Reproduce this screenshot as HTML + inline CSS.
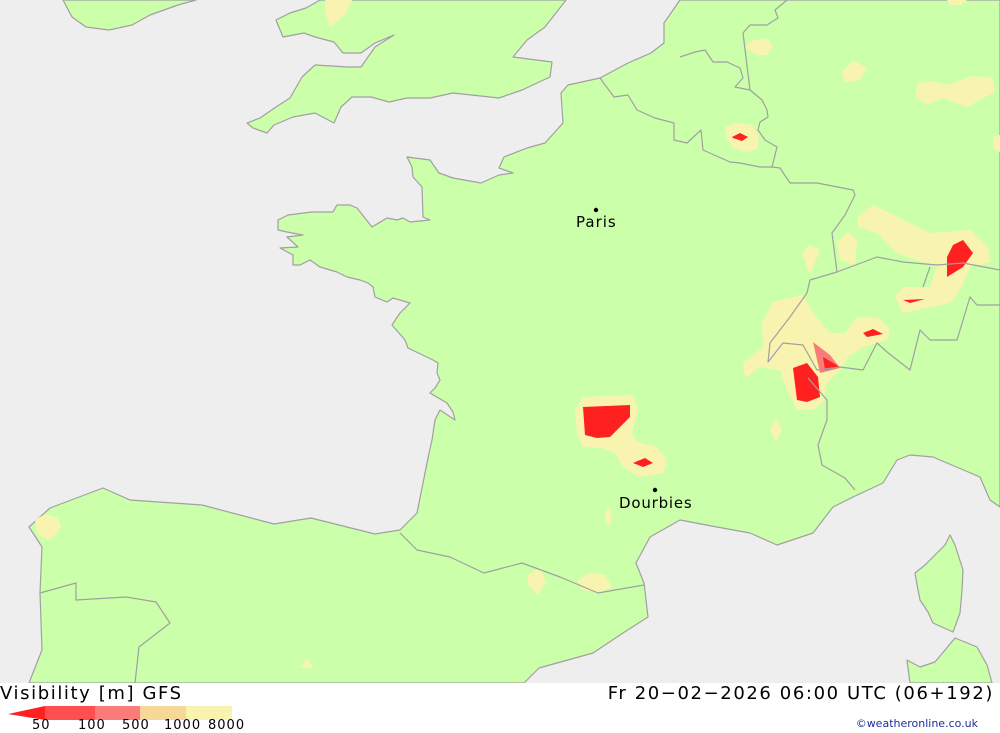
<!DOCTYPE html>
<html><head><meta charset="utf-8">
<style>
html,body{margin:0;padding:0;background:#fff;}
body{width:1000px;height:733px;position:relative;overflow:hidden;font-family:"DejaVu Sans","Liberation Sans",sans-serif;}
svg{position:absolute;left:0;top:0;}
.t{position:absolute;font-size:18px;color:#000;white-space:nowrap;letter-spacing:1.6px;}
.l{position:absolute;font-size:13px;color:#000;top:718px;letter-spacing:1px;}
</style></head><body>
<svg width="1000" height="683" viewBox="0 0 1000 683">
<rect width="1000" height="683" fill="#eeeeee"/>
<g fill="#ccffaa" stroke="#a0a0a0" stroke-width="1.2" stroke-linejoin="round">
<path d="M63,0 L72,17 L86,27 L109,30 L132,25 L150,15 L178,5 L196,0 Z"/>
<path d="M320,0 L306,8 L290,13 L276,20 L283,37 L304,33 L315,37 L334,42 L343,53 L361,53 L375,43 L394,35 L375,47 L361,67 L348,67 L315,65 L302,77 L290,98 L276,107 L260,118 L247,123 L253,128 L267,133 L274,125 L293,117 L315,113 L334,123 L341,107 L352,97 L371,97 L389,102 L407,98 L430,98 L453,93 L499,98 L522,90 L550,77 L552,62 L513,57 L527,40 L545,27 L566,0 Z"/>
<path d="M680,0 L664,23 L664,43 L651,53 L628,63 L600,78 L568,85 L561,93 L563,123 L545,143 L527,148 L504,157 L499,168 L513,173 L499,175 L481,183 L453,178 L439,173 L430,160 L407,157 L412,167 L413,177 L422,187 L423,217 L430,220 L410,222 L403,218 L397,220 L387,218 L372,227 L357,208 L350,205 L337,205 L333,212 L320,212 L312,212 L288,215 L278,220 L278,230 L287,232 L303,235 L287,237 L298,247 L280,248 L293,255 L293,265 L300,265 L310,260 L320,267 L337,272 L347,277 L360,280 L368,283 L373,287 L375,297 L387,302 L393,298 L410,303 L400,313 L392,325 L405,340 L408,348 L433,360 L438,363 L437,373 L440,380 L435,388 L430,393 L447,403 L453,412 L455,420 L440,410 L435,420 L432,440 L429,453 L417,513 L400,530 L375,534 L311,518 L274,524 L202,505 L130,500 L103,488 L50,508 L29,527 L42,547 L40,593 L42,650 L29,683 L524,683 L539,668 L593,653 L623,633 L648,617 L644,583 L636,563 L650,537 L680,520 L717,527 L750,533 L777,545 L813,533 L833,507 L853,497 L883,483 L897,460 L910,455 L933,457 L980,477 L990,500 L1000,507 L1000,0 Z"/>
<path d="M950,535 L955,545 L963,570 L962,590 L960,613 L953,632 L933,623 L928,612 L920,600 L918,590 L915,573 L925,565 L937,553 L945,545 Z"/>
<path d="M955,638 L977,647 L987,665 L992,683 L910,683 L907,660 L920,667 L935,662 Z"/>
</g>
<g fill="#f8f4b0">
<path d="M325,0 L352,0 L345,15 L330,27 L326,15 Z"/>
<path d="M745,47 L753,40 L768,39 L773,47 L767,55 L757,55 Z"/>
<path d="M842,72 L853,60 L867,68 L860,80 L845,82 Z"/>
<path d="M917,83 L933,81 L947,85 L973,76 L993,78 L995,92 L967,107 L943,98 L927,105 L916,97 Z"/>
<path d="M947,0 L967,0 L960,5 L950,5 Z"/>
<path d="M993,137 L1000,135 L1000,152 L993,148 Z"/>
<path d="M725,127 L737,123 L752,125 L759,137 L757,149 L747,152 L733,148 L727,140 Z"/>
<path d="M858,217 L873,205 L930,233 L970,230 L988,247 L990,262 L970,267 L960,290 L950,303 L903,313 L895,297 L903,287 L930,287 L937,267 L897,253 L877,233 L858,227 Z"/>
<path d="M810,245 L820,250 L810,275 L802,253 Z"/>
<path d="M848,232 L857,240 L855,265 L840,260 L837,242 Z"/>
<path d="M743,363 L763,347 L762,323 L773,302 L803,295 L813,313 L830,333 L845,333 L857,317 L880,318 L890,330 L887,340 L863,347 L848,357 L840,370 L827,383 L823,403 L813,410 L797,410 L787,390 L780,370 L760,367 L745,378 Z"/>
<path d="M583,397 L633,395 L638,410 L632,433 L637,442 L657,447 L667,460 L663,473 L640,477 L623,467 L615,453 L603,448 L583,447 L577,433 L575,410 Z"/>
<path d="M770,430 L776,418 L782,430 L776,442 Z"/>
<path d="M608,505 L612,517 L609,528 L605,517 Z"/>
<path d="M528,575 L540,568 L546,582 L538,595 L528,585 Z"/>
<path d="M578,580 L590,573 L605,575 L612,587 L600,592 L582,590 Z"/>
<path d="M35,520 L45,514 L58,518 L61,528 L50,540 L38,535 Z"/>
<path d="M300,668 L307,658 L313,668 Z"/>
</g>
<g fill="#fa7c78">
<path d="M813,342 L830,355 L840,368 L820,373 Z"/>
</g>
<g fill="#ff2020">
<path d="M963,240 L973,253 L963,267 L947,277 L947,257 L953,245 Z"/>
<path d="M903,300 L925,299 L910,303 Z"/>
<path d="M793,368 L807,363 L818,377 L820,397 L807,402 L797,400 Z"/>
<path d="M823,357 L840,367 L825,370 Z"/>
<path d="M863,333 L873,329 L883,334 L867,337 Z"/>
<path d="M583,407 L630,405 L630,417 L617,430 L610,437 L597,438 L585,435 Z"/>
<path d="M633,463 L645,458 L653,463 L643,467 Z"/>
<path d="M732,137 L740,133 L748,137 L742,141 L733,138 Z"/>
</g>
<g fill="none" stroke="#a0a0a0" stroke-width="1.2" stroke-linejoin="round">
<path d="M600,78 L614,97 L628,95 L637,110 L655,118 L674,123 L674,140 L687,143 L701,130 L703,150 L730,162 L740,163 L760,167 L772,167 L780,168 L790,183 L817,183 L853,190 L855,195 L845,215 L832,233 L837,272 L877,257 L903,262 L937,265 L963,263 L1000,270"/>
<path d="M680,57 L695,52 L705,50 L713,62 L727,62 L740,68 L743,78 L735,87 L750,90 L762,100 L767,110 L768,117 L760,122 L758,130 L765,140 L777,147 L772,167"/>
<path d="M750,90 L743,33 L750,25 L767,25 L778,18 L775,10 L787,0"/>
<path d="M837,272 L810,280 L807,293 L790,317 L770,343 L768,362 L783,343 L803,345 L817,370 L840,367 L863,370 L877,343 L887,352 L910,370 L920,330 L930,340 L957,340 L970,297 L977,305 L1000,305"/>
<path d="M923,287 L930,267"/>
<path d="M808,378 L827,400 L827,420 L818,445 L822,465 L845,478 L855,490"/>
<path d="M400,533 L417,550 L450,557 L484,573 L522,563 L560,577 L598,593 L644,585"/>
<path d="M40,593 L76,583 L76,600 L126,597 L156,602 L170,623 L139,647 L135,683"/>
</g>
<circle cx="596" cy="210" r="2.2" fill="#000"/>
<text x="576" y="227" font-family="DejaVu Sans, Liberation Sans, sans-serif" font-size="15" letter-spacing="1" fill="#000">Paris</text>
<circle cx="655" cy="490" r="2.2" fill="#000"/>
<text x="619" y="508" font-family="DejaVu Sans, Liberation Sans, sans-serif" font-size="15" letter-spacing="0.8" fill="#000">Dourbies</text>
</svg>
<div class="t" style="left:0;top:683px;">Visibility [m] GFS</div>
<div class="t" style="right:6px;top:683px;">Fr 20−02−2026 06:00 UTC (06+192)</div>
<svg width="240" height="16" style="top:705px;left:0">
<polygon points="8,9 45,1 45,15" fill="#ff2020"/>
<rect x="45" y="1" width="50" height="14" fill="#ff5050"/>
<rect x="95" y="1" width="45" height="14" fill="#fa7c78"/>
<rect x="140" y="1" width="46" height="14" fill="#f8d898"/>
<rect x="186" y="1" width="46" height="14" fill="#f8f4b0"/>
</svg>
<div class="l" style="left:32px">50</div>
<div class="l" style="left:78px">100</div>
<div class="l" style="left:122px">500</div>
<div class="l" style="left:164px">1000</div>
<div class="l" style="left:208px">8000</div>
<div style="position:absolute;right:22px;top:717px;font-size:11px;color:#1a2ea0;">©weatheronline.co.uk</div>
</body></html>
